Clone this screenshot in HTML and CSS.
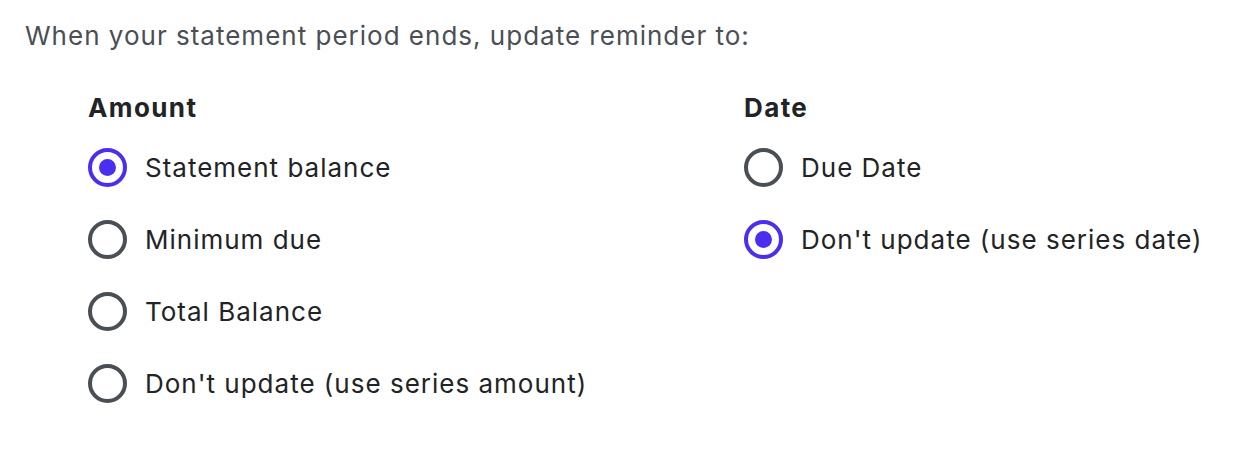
FILE: index.html
```html
<!DOCTYPE html>
<html>
<head>
<meta charset="utf-8">
<link rel="stylesheet" href="styles.css">
</head>
<body>
<div class="page">
  <p class="intro">When your statement period ends, update reminder to:</p>
  <div class="columns">
    <div class="group">
      <div class="group-title">Amount</div>
      <label class="option"><span class="radio checked"></span><span class="label">Statement balance</span></label>
      <label class="option"><span class="radio"></span><span class="label">Minimum due</span></label>
      <label class="option"><span class="radio"></span><span class="label">Total Balance</span></label>
      <label class="option"><span class="radio"></span><span class="label">Don't update (use series amount)</span></label>
    </div>
    <div class="group">
      <div class="group-title">Date</div>
      <label class="option"><span class="radio"></span><span class="label">Due Date</span></label>
      <label class="option"><span class="radio checked"></span><span class="label">Don't update (use series date)</span></label>
    </div>
  </div>
</div>
</body>
</html>
```
FILE: styles.css
```css
html, body {
  margin: 0;
  padding: 0;
  background: #ffffff;
}
.page {
  padding: 20px 0 0 25px;
  font-family: Inter, "Noto Sans", sans-serif;
}
.intro {
  margin: 0;
  font-size: 26px;
  line-height: 32px;
  letter-spacing: 1px;
  color: #4a4f56;
}
.columns {
  display: grid;
  grid-template-columns: 656px auto;
  padding-left: 63px;
  margin-top: 40px;
}
.group {
  display: flex;
  flex-direction: column;
}
.group-title {
  font-size: 26px;
  font-weight: 700;
  letter-spacing: 1.4px;
  color: #222326;
  line-height: 32px;
  margin-bottom: 7px;
}
.option {
  display: flex;
  align-items: center;
  gap: 18px;
  height: 72px;
}
.radio {
  box-sizing: border-box;
  width: 39px;
  height: 39px;
  border-radius: 50%;
  border: 4px solid #4a4f56;
  display: flex;
  align-items: center;
  justify-content: center;
  flex: none;
}
.radio.checked {
  border-color: #4a2ff0;
}
.radio.checked::after {
  content: "";
  width: 17px;
  height: 17px;
  border-radius: 50%;
  background: #4a2ff0;
}
.label {
  font-size: 26px;
  letter-spacing: 1px;
  color: #222326;
}
```
